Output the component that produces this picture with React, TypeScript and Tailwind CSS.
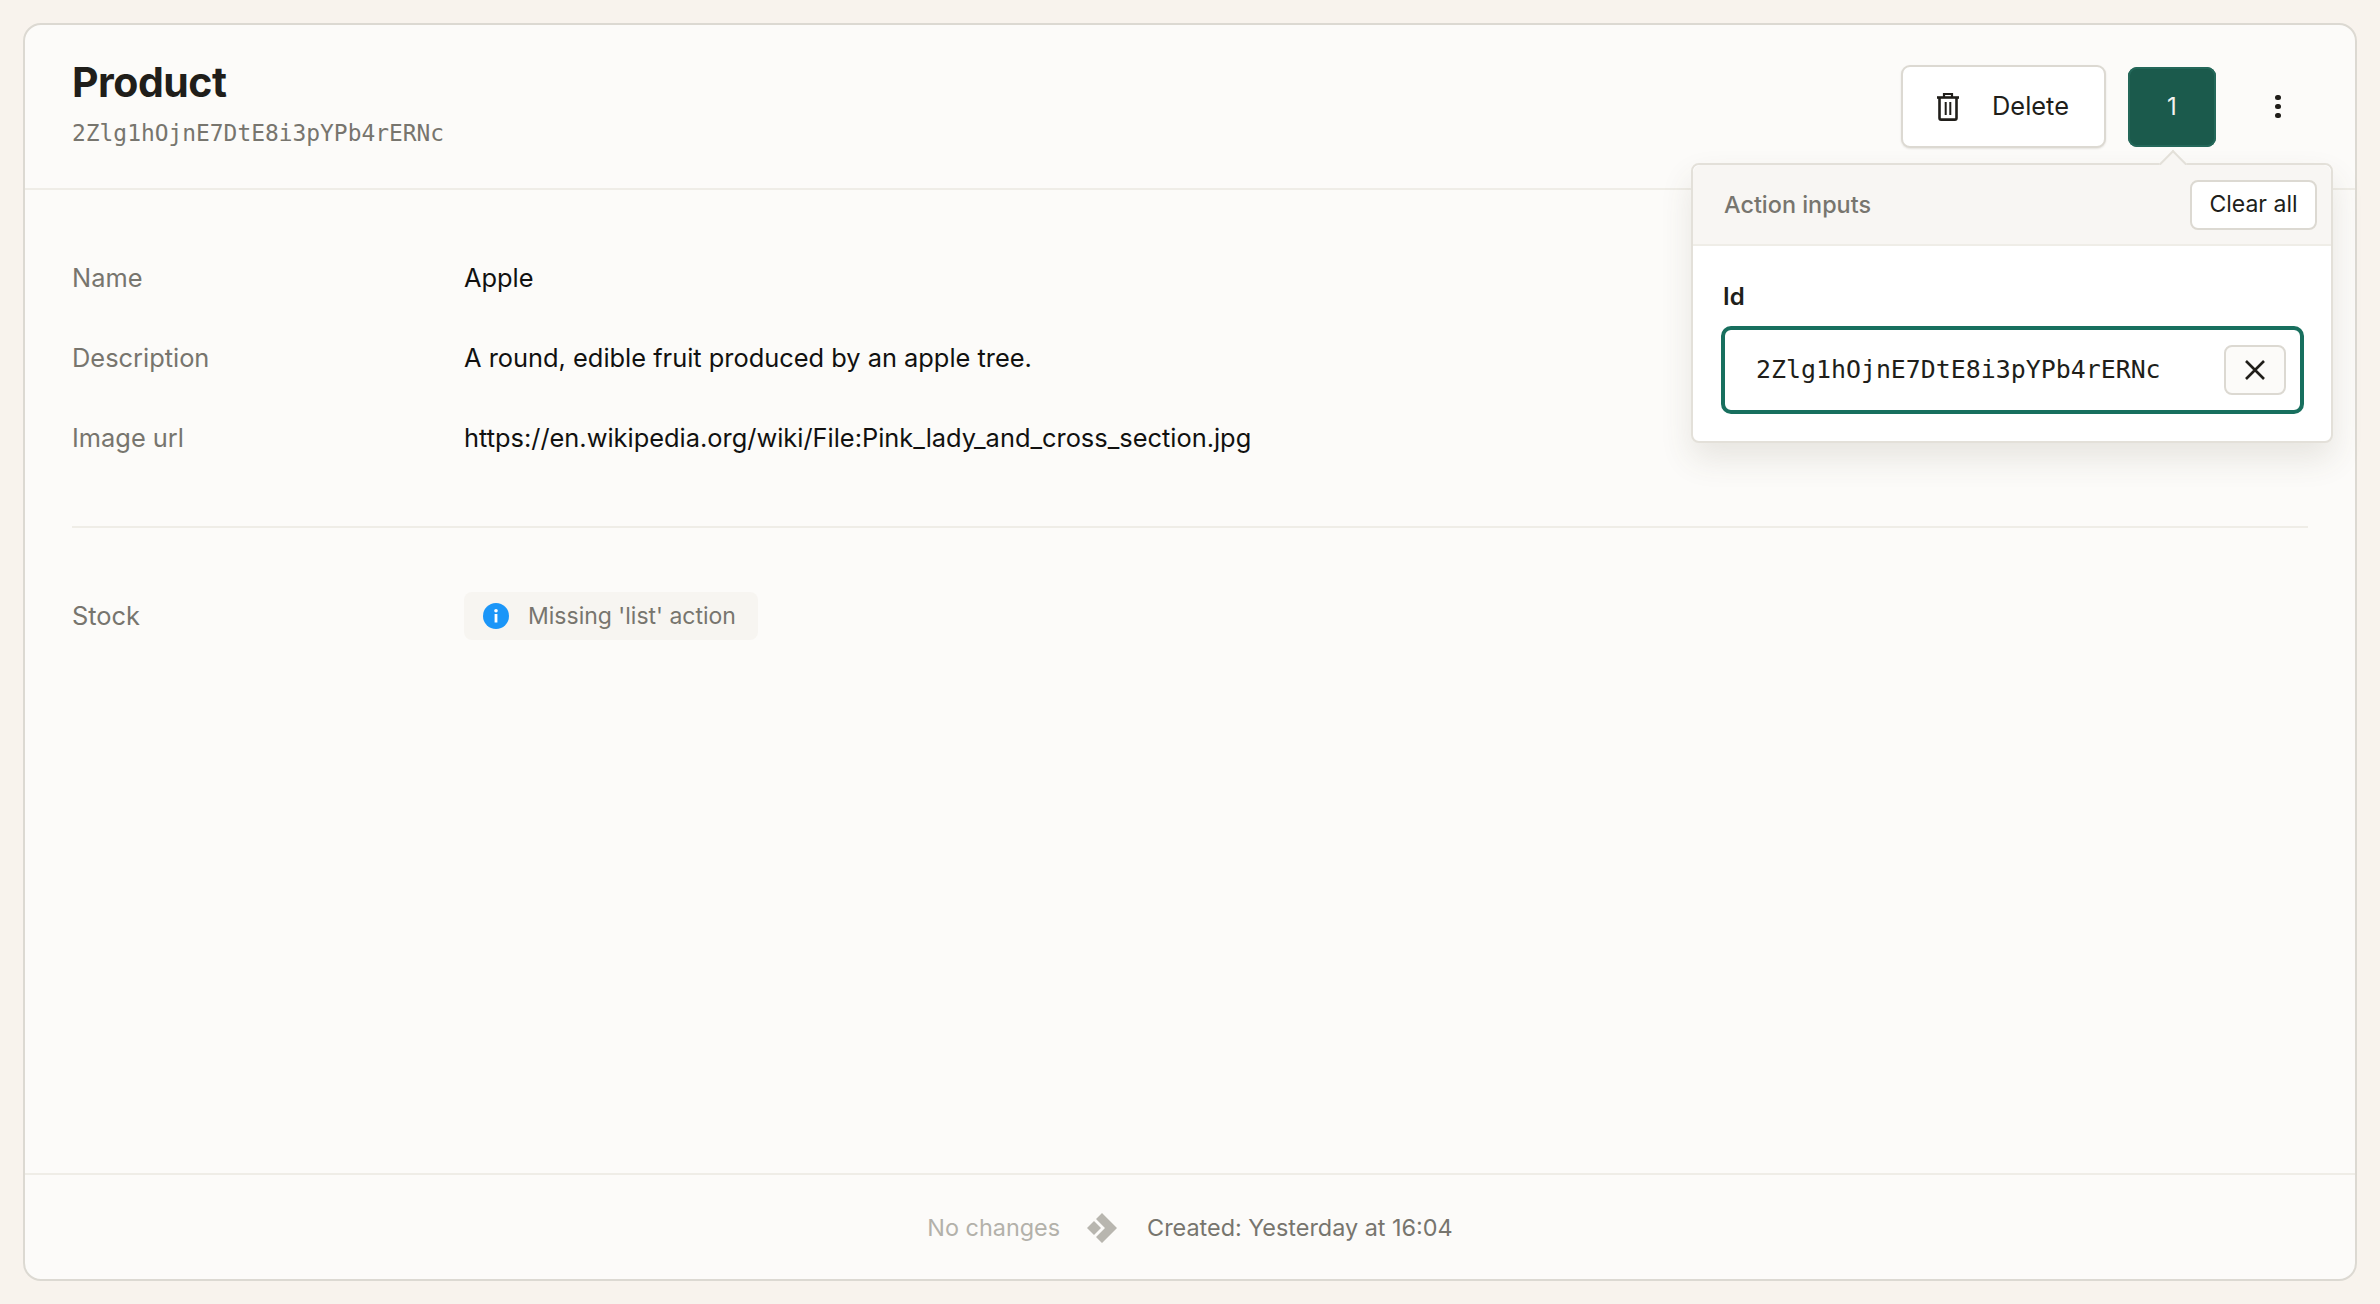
import React from "react";

const sans = "font-['Inter','Liberation_Sans',sans-serif]";
const mono = "font-['DejaVu_Sans_Mono','Liberation_Mono',monospace]";

function Trash() {
  return (
    <svg width="24" height="29" viewBox="0 0 24 29" fill="none" stroke="#201e1a" strokeWidth="2.6">
      <path d="M1 5.5h22" />
      <path d="M8 5V2h8v3" strokeWidth="2.2" />
      <path d="M3.5 6v20a1.6 1.6 0 0 0 1.6 1.6h13.8a1.6 1.6 0 0 0 1.6-1.6V6" />
      <path d="M9.7 10v13M14.3 10v13" strokeWidth="2" />
    </svg>
  );
}

function Row({ label, value }: { label: string; value: string }) {
  return (
    <div className="flex h-[80px] items-center">
      <div className="w-[392px] text-[#77756e]">{label}</div>
      <div className="text-[#111110]">{value}</div>
    </div>
  );
}

export default function App() {
  return (
    <div className={`${sans} h-[1304px] bg-[#f8f3ed] p-[23px] text-[25.4px]`}>
      <div className="relative flex h-[1258px] flex-col rounded-[18px] border-2 border-[#dcd9d2] bg-[#fcfbf9]">
        <header className="flex h-[165px] shrink-0 items-start justify-between border-b-2 border-[#efede7] pl-[47px] pr-[47px]">
          <div className="pt-[33px]">
            <h1 className="text-[41px] leading-[48px] font-bold tracking-[-0.5px] text-[#201e1a]">Product</h1>
            <div className={`${mono} mt-[12px] text-[22.9px] leading-[30px] text-[#77756e]`}>2Zlg1hOjnE7DtE8i3pYPb4rERNc</div>
          </div>
          <div className="flex items-center pt-[40px]">
            <button className="flex h-[83px] w-[205px] items-center rounded-[9px] border-2 border-[#dcd9d2] bg-white pl-[33px] text-[#201e1a] shadow-[0_1px_2px_rgba(60,50,30,0.12)]">
              <Trash />
              <span className="ml-[32px]">Delete</span>
            </button>
            <button className="ml-[22px] flex h-[80px] w-[88px] items-center justify-center rounded-[9px] bg-[#1b5a4c] text-[24px] text-[#f4f3ef] ring-2 ring-inset ring-[#24685a]">
              1
            </button>
            <div className="ml-[32px] flex w-[60px] flex-col items-center gap-[3.5px]">
              <span className="h-[5.5px] w-[5.5px] rounded-full bg-[#201e1a]" />
              <span className="h-[5.5px] w-[5.5px] rounded-full bg-[#201e1a]" />
              <span className="h-[5.5px] w-[5.5px] rounded-full bg-[#201e1a]" />
            </div>
          </div>
        </header>

        <main className="mx-[47px] flex-1">
          <section className="border-b-2 border-[#efede7] pt-[48px] pb-[48px]">
            <Row label="Name" value="Apple" />
            <Row label="Description" value="A round, edible fruit produced by an apple tree." />
            <Row label="Image url" value="https://en.wikipedia.org/wiki/File:Pink_lady_and_cross_section.jpg" />
          </section>
          <section className="flex h-[176px] items-center">
            <div className="w-[392px] text-[#77756e]">Stock</div>
            <div className="flex h-[48px] w-[294px] items-center rounded-[8px] bg-[#f7f5f1] pl-[18px] text-[23px] text-[#77756e]">
              <svg className="ml-[1px]" width="26" height="26" viewBox="0 0 26 26">
                <circle cx="13" cy="13" r="13" fill="#1b96f8" />
                <circle cx="13" cy="7.8" r="1.8" fill="#fff" />
                <rect x="11.6" y="11" width="2.8" height="8.5" fill="#fff" />
              </svg>
              <span className="ml-[19px]">Missing 'list' action</span>
            </div>
          </section>
        </main>

        <footer className="flex h-[106px] shrink-0 items-center justify-center border-t-2 border-[#efede7] pt-[2px] text-[23.4px]">
          <span className="text-[#b3b1aa]">No changes</span>
          <svg className="ml-[26px]" width="32" height="32" viewBox="0 0 32 32" fill="#b8b6af">
            <path d="M8 9l7 7-7 7-7-7z" />
            <path d="M16 1l15 15-15 15-6-6 9-9-9-9z" />
          </svg>
          <span className="ml-[29px] text-[#77756e]">Created: Yesterday at 16:04</span>
        </footer>

        <div className="absolute top-[138px] left-[1666px] w-[642px] rounded-[8px] border-2 border-[#e3e0d9] bg-white text-[23.4px] shadow-[0_16px_32px_rgba(80,70,50,0.12)]">
          <div className="absolute top-[-11px] left-[470px] h-[20px] w-[20px] rotate-45 border-t-2 border-l-2 border-[#e3e0d9] bg-[#f8f6f3]" />
          <div className="relative flex h-[81px] items-center justify-between rounded-t-[8px] border-b-2 border-[#efede7] bg-[#f8f6f3] pr-[14px] pl-[31px]">
            <span className="font-medium text-[#77756e]">Action inputs</span>
            <button className="h-[50px] w-[127px] rounded-[8px] border-2 border-[#dcd9d2] bg-white text-[23px] text-[#201e1a]">Clear all</button>
          </div>
          <div className="pr-[27px] pl-[28px] pt-[36px] pb-[27px]">
            <label className="block pl-[2px] text-[24px] leading-[30px] font-semibold text-[#201e1a]">Id</label>
            <div className="mt-[14px] flex h-[88px] items-center justify-between rounded-[10px] border-4 border-[#186f5e] pr-[14px] pl-[31px]">
              <span className={`${mono} text-[24.9px] text-[#201e1a]`}>2Zlg1hOjnE7DtE8i3pYPb4rERNc</span>
              <button className="flex h-[50px] w-[62px] items-center justify-center rounded-[8px] border-2 border-[#dcd9d2] bg-[#fcfbf9]">
                <svg width="22" height="22" viewBox="0 0 22 22" stroke="#201e1a" strokeWidth="2.6" fill="none">
                  <path d="M2 2l18 18M20 2L2 20" />
                </svg>
              </button>
            </div>
          </div>
        </div>
      </div>
    </div>
  );
}
